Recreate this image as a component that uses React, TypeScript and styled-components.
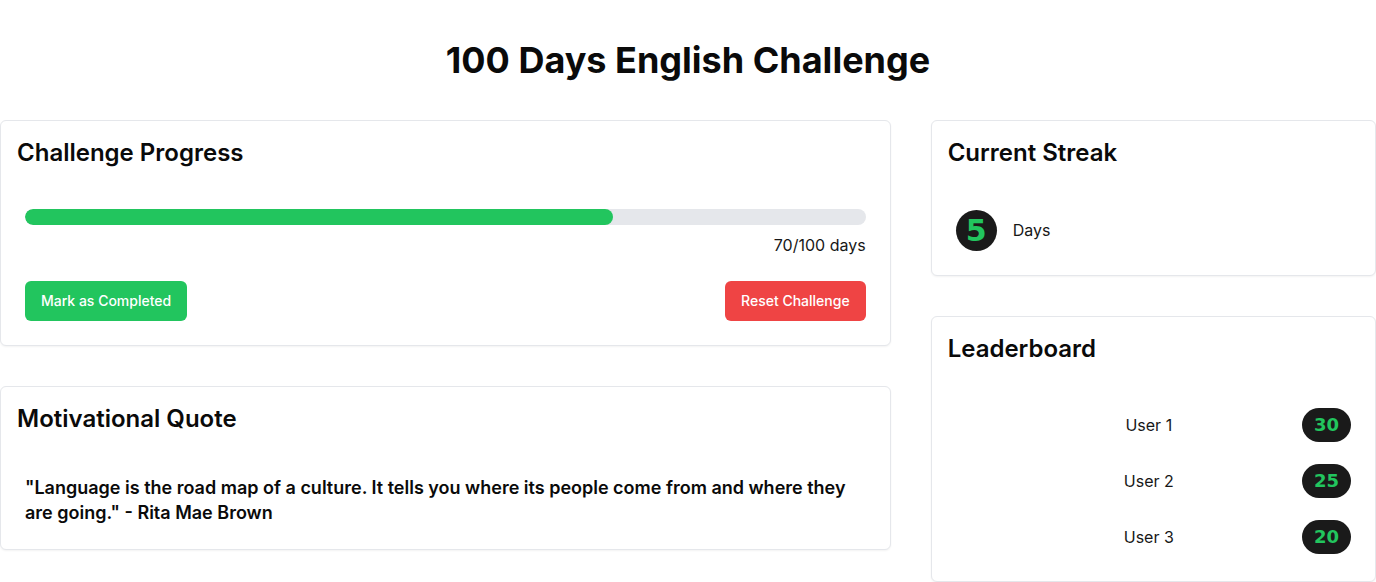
import React from "react";
import styled, { createGlobalStyle } from "styled-components";

const GlobalStyle = createGlobalStyle`
  * { box-sizing: border-box; }
  html, body { margin: 0; padding: 0; background: #ffffff; }
  body {
    font-family: Inter, "Noto Sans", "Liberation Sans", sans-serif;
    color: #0a0a0a;
  }
`;

const Page = styled.div`
  padding: 40px 0 40px;
`;

const Title = styled.h1`
  margin: 0 0 40px;
  font-size: 36px;
  line-height: 40px;
  font-weight: 700;
  text-align: center;
  color: #0a0a0a;
`;

const Grid = styled.div`
  display: grid;
  grid-template-columns: 2fr 1fr;
  gap: 40px;
  align-items: start;
`;

const Column = styled.div`
  display: flex;
  flex-direction: column;
  gap: 40px;
`;

const Card = styled.section`
  background: #ffffff;
  border: 1px solid #e5e7eb;
  border-radius: 6px;
  box-shadow: 0 1px 2px rgba(0, 0, 0, 0.05);
`;

const CardHeader = styled.div`
  padding: 16px;
`;

const CardTitle = styled.h2`
  margin: 0;
  font-size: 24px;
  line-height: 32px;
  font-weight: 600;
  color: #0a0a0a;
`;

const CardContent = styled.div`
  padding: 24px;
`;

const Track = styled.div`
  height: 16px;
  border-radius: 9999px;
  background: #e5e7eb;
  overflow: hidden;
`;

const Fill = styled.div`
  height: 100%;
  border-radius: 9999px;
  background: #22c55e;
`;

const ProgressLabel = styled.p`
  margin: 8px 0 0;
  text-align: right;
  font-size: 16px;
  line-height: 24px;
  color: #171717;
`;

const Actions = styled.div`
  display: flex;
  justify-content: space-between;
  margin-top: 24px;
`;

const Button = styled.button<{ $variant: "success" | "danger" }>`
  height: 40px;
  padding: 0 16px;
  border: none;
  border-radius: 6px;
  font-family: Inter, "Liberation Sans", sans-serif;
  font-size: 14px;
  line-height: 20px;
  font-weight: 500;
  color: #ffffff;
  background: ${(p) => (p.$variant === "success" ? "#22c55e" : "#ef4444")};
  cursor: pointer;
`;

const Quote = styled.p`
  margin: 0;
  font-size: 18px;
  line-height: 25px;
  font-weight: 600;
  color: #0a0a0a;
`;

const StreakRow = styled.div`
  display: flex;
  align-items: center;
  gap: 16px;
  min-height: 42px;
`;

const StreakCircle = styled.div`
  width: 41px;
  height: 41px;
  border-radius: 50%;
  background: #1a1a1a;
  color: #22c55e;
  display: flex;
  align-items: center;
  justify-content: center;
  font-family: "DejaVu Sans", Verdana, sans-serif;
  font-size: 30px;
  font-weight: 700;
`;

const BodyText = styled.span`
  font-size: 16px;
  line-height: 24px;
  color: #171717;
`;

const LeaderList = styled.ul`
  list-style: none;
  margin: 0;
  padding: 0;
  display: flex;
  flex-direction: column;
  gap: 16px;
`;

const LeaderRow = styled.li`
  display: flex;
  align-items: center;
  justify-content: space-between;
  height: 40px;
`;

const Avatar = styled.span`
  width: 40px;
  height: 40px;
  border-radius: 50%;
`;

const ScoreBadge = styled.span`
  padding: 4px 12px;
  border-radius: 9999px;
  background: #1a1a1a;
  color: #22c55e;
  font-family: "DejaVu Sans", Verdana, sans-serif;
  font-size: 18px;
  line-height: 26px;
  font-weight: 700;
`;

const leaders = [
  { name: "User 1", score: 30 },
  { name: "User 2", score: 25 },
  { name: "User 3", score: 20 },
];

export default function App() {
  const progress = 70;
  return (
    <>
      <GlobalStyle />
      <Page>
        <Title>100 Days English Challenge</Title>
        <Grid>
          <Column>
            <Card>
              <CardHeader>
                <CardTitle>Challenge Progress</CardTitle>
              </CardHeader>
              <CardContent>
                <Track>
                  <Fill style={{ width: `${progress}%` }} />
                </Track>
                <ProgressLabel>{progress}/100 days</ProgressLabel>
                <Actions>
                  <Button $variant="success">Mark as Completed</Button>
                  <Button $variant="danger">Reset Challenge</Button>
                </Actions>
              </CardContent>
            </Card>
            <Card>
              <CardHeader>
                <CardTitle>Motivational Quote</CardTitle>
              </CardHeader>
              <CardContent>
                <Quote>
                  "Language is the road map of a culture. It tells you where its
                  people come from and where they are going." - Rita Mae Brown
                </Quote>
              </CardContent>
            </Card>
          </Column>
          <Column>
            <Card>
              <CardHeader>
                <CardTitle>Current Streak</CardTitle>
              </CardHeader>
              <CardContent>
                <StreakRow>
                  <StreakCircle>5</StreakCircle>
                  <BodyText>Days</BodyText>
                </StreakRow>
              </CardContent>
            </Card>
            <Card>
              <CardHeader>
                <CardTitle>Leaderboard</CardTitle>
              </CardHeader>
              <CardContent>
                <LeaderList>
                  {leaders.map((l) => (
                    <LeaderRow key={l.name}>
                      <Avatar />
                      <BodyText>{l.name}</BodyText>
                      <ScoreBadge>{l.score}</ScoreBadge>
                    </LeaderRow>
                  ))}
                </LeaderList>
              </CardContent>
            </Card>
          </Column>
        </Grid>
      </Page>
    </>
  );
}
